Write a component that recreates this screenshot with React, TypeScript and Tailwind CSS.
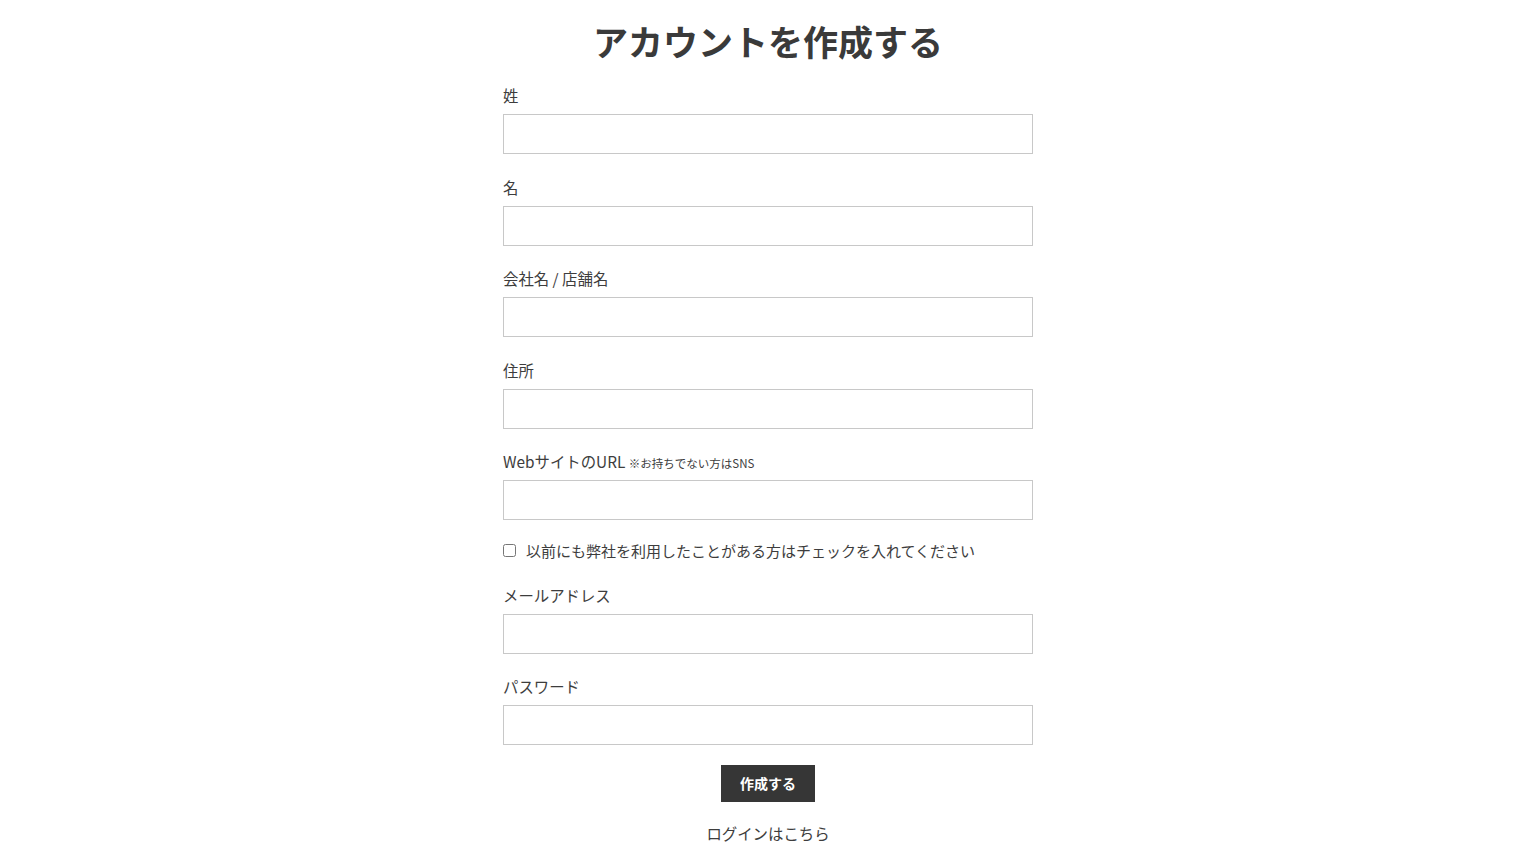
import React from 'react';

const font = { fontFamily: '"Noto Sans CJK JP", "Noto Sans", sans-serif' };

const Field: React.FC<{ label: React.ReactNode; type?: string }> = ({ label, type = 'text' }) => (
    <div className="mb-[21.5px]">
        <label className="block h-[22px] text-[15.4px] leading-[22px] text-[#3d3d3d] mb-2 whitespace-nowrap">{label}</label>
        <input
            type={type}
            className="block w-full h-10 border border-[#c8c8c8] bg-white px-3 text-[16px] text-[#333] outline-none"
        />
    </div>
);

export default function App() {
    return (
        <div className="min-h-screen bg-white" style={font}>
            <div className="w-[530px] mx-auto">
                <h1 className="pt-[18px] text-center text-[35px] leading-[46px] font-bold text-[#3a3a3a] mb-[20px]">
                    アカウントを作成する
                </h1>
                <Field label="姓" />
                <Field label="名" />
                <Field label="会社名 / 店舗名" />
                <Field label="住所" />
                <Field
                    label={
                        <>
                            WebサイトのURL <span className="text-[11.5px] leading-none">※お持ちでない方はSNS</span>
                        </>
                    }
                />
                <div className="flex items-center gap-[10px] -mt-[2px] mb-[22px] h-[22px]">
                    <input type="checkbox" className="w-[13px] h-[13px] m-0" />
                    <span className="text-[15px] leading-[22px] text-[#3d3d3d]">
                        以前にも弊社を利用したことがある方はチェックを入れてください
                    </span>
                </div>
                <Field label="メールアドレス" />
                <Field label="パスワード" type="password" />
                <div className="flex justify-center -mt-[2px]">
                    <button className="w-[94px] h-[37px] bg-[#363636] text-white text-[14px] font-bold">
                        作成する
                    </button>
                </div>
                <div className="text-center mt-[19px]">
                    <a href="#" className="text-[15.4px] leading-[22px] text-[#3d3d3d]">
                        ログインはこちら
                    </a>
                </div>
            </div>
        </div>
    );
}
